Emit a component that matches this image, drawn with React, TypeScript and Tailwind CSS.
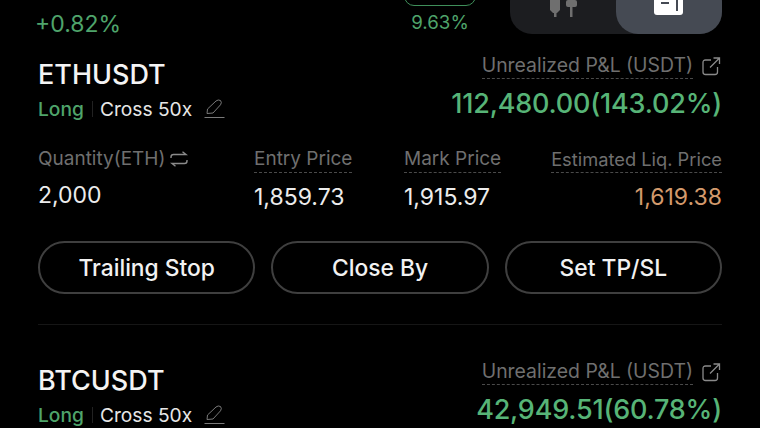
const font = { fontFamily: 'Inter, "Liberation Sans", sans-serif' }

function EditIcon() {
  return (
    <svg width="21" height="20" viewBox="0 0 21 20" fill="none" stroke="#7a7a7a" strokeWidth="1" className="ml-[12px]">
      <path d="M3 14.5 L3.5 10 L12 2 Q14.2 0.2 16.5 1.5 Q18.2 3.5 16.5 5.8 L9 14 Z" />
      <path d="M0.5 18.5 H20.5" />
    </svg>
  )
}

function LinkIcon() {
  return (
    <svg width="19" height="19" viewBox="0 0 19 19" fill="none" stroke="#8a8a8a" strokeWidth="1.3" className="mr-[1px]">
      <path d="M9 3 H3.5 Q1 3 1 5.5 V15 Q1 17.5 3.5 17.5 H13 Q15.5 17.5 15.5 15 V10" />
      <path d="M8 10.5 L17.5 1 M11.5 1 H17.5 V7" />
    </svg>
  )
}

function SwapIcon() {
  return (
    <svg width="18" height="16" viewBox="0 0 18 16" fill="none" stroke="#8a8a8a" strokeWidth="1.4" className="ml-[5px]">
      <path d="M1 7 V6 Q1 3.5 3.5 3.5 H16 L12.5 0.8" />
      <path d="M17 9 V10 Q17 12.5 14.5 12.5 H2 L5.5 15.2" />
    </svg>
  )
}

function Dotted({ children }: { children: React.ReactNode }) {
  return <span className="border-b border-dashed border-[#4a4a4a] pb-[1px] text-[19px] leading-[24px] text-[#6f6f6f]">{children}</span>
}

interface PositionProps {
  symbol: string
  pnl: string
}

function PositionHead({ symbol, pnl }: PositionProps) {
  return (
    <div className="flex justify-between">
      <div className="mt-[8px] flex flex-col">
        <span className="text-[27px] leading-[32px] font-medium text-[#f4f4f4]">{symbol}</span>
        <div className="mt-[6px] flex items-center text-[19.2px] leading-[24px]">
          <span className="font-medium text-[#4fa46b]">Long</span>
          <span className="mr-[7px] ml-[8px] h-[16px] w-px bg-[#222]" />
          <span className="text-[#e6e6e6]">Cross 50x</span>
          <EditIcon />
        </div>
      </div>
      <div className="mt-[2px] flex flex-col items-end">
        <div className="flex items-center gap-[9px]">
          <span className="border-b border-dashed border-[#4a4a4a] pb-[1px] text-[19.4px] leading-[24px] text-[#6f6f6f]">Unrealized P&amp;L (USDT)</span>
          <LinkIcon />
        </div>
        <span className="mt-[8px] text-[27px] leading-[34px] font-medium tracking-[-0.2px] text-[#57b477]">{pnl}</span>
      </div>
    </div>
  )
}

function Stat({ label, value }: { label: React.ReactNode; value: string }) {
  return (
    <div className="flex flex-col items-start">
      {label}
      <span className="mt-[10px] text-[23px] leading-[28px] text-[#ececec]">{value}</span>
    </div>
  )
}

function PillButton({ label }: { label: string }) {
  return (
    <button type="button" className="h-[53px] flex-1 rounded-full border-2 border-[#3f3f3f] pt-[2px] text-[22.8px] font-medium text-[#f2f2f2]">
      {label}
    </button>
  )
}

export default function App() {
  return (
    <div style={font} className="h-[428px] w-[760px] overflow-hidden bg-black">
      <div className="flex h-[49px] items-start justify-between pr-[38px] pl-[35px]">
        <span className="mt-[10px] text-[23px] leading-[28px] text-[#4fa46b]">+0.82%</span>
        <div className="ml-auto flex flex-col items-center">
          <div className="mt-[-20px] h-[26px] w-[72px] rounded-[10px] border border-[#3f8f5a]" />
          <span className="mt-[6px] text-[18.7px] leading-[22px] text-[#4fa46b]">9.63%</span>
        </div>
        <div className="mt-[-20px] ml-[34px] flex h-[54px] w-[212px] rounded-[22px] bg-[#1c1d20]">
          <div className="flex w-[106px] items-start justify-center">
            <svg width="30" height="18" viewBox="0 0 30 18" fill="#6f6f6f" className="mt-[20px]">
              <path d="M2 0 H12 V10 L9 13 H5 L2 10 Z" />
              <rect x="6" y="12" width="2.5" height="5" />
              <rect x="18" y="0" width="11" height="7" rx="2" />
              <rect x="22" y="6" width="2.5" height="11" />
            </svg>
          </div>
          <div className="flex w-[106px] items-start justify-center rounded-[22px] bg-[#454a53]">
            <svg width="30" height="36" viewBox="0 0 30 36" className="mt-0">
              <rect x="0" y="4" width="29" height="31" rx="3" fill="#fff" />
              <rect x="7" y="22" width="8" height="2" fill="#454a53" />
              <rect x="22" y="14" width="2" height="17" fill="#454a53" />
            </svg>
          </div>
        </div>
      </div>

      <div className="px-[38px]">
        <div className="pt-[2px]">
          <PositionHead symbol="ETHUSDT" pnl="112,480.00(143.02%)" />
        </div>

        <div className="mt-[26px] flex">
          <div className="w-[216px]">
            <Stat
              label={
                <span className="flex items-center text-[19px] leading-[24px] text-[#6f6f6f]">
                  Quantity(ETH)
                  <SwapIcon />
                </span>
              }
              value="2,000"
            />
          </div>
          <div className="w-[150px]">
            <Stat label={<Dotted>Entry Price</Dotted>} value="1,859.73" />
          </div>
          <div className="flex-1">
            <Stat label={<Dotted>Mark Price</Dotted>} value="1,915.97" />
          </div>
          <div className="flex flex-col items-end">
            <span className="border-b border-dashed border-[#4a4a4a] pb-[1px] text-[18.3px] leading-[24px] text-[#6f6f6f]">Estimated Liq. Price</span>
            <span className="mt-[10px] text-[23px] leading-[28px] text-[#d39a6c]">1,619.38</span>
          </div>
        </div>

        <div className="mt-[30px] flex gap-[16px]">
          <PillButton label="Trailing Stop" />
          <PillButton label="Close By" />
          <PillButton label="Set TP/SL" />
        </div>

        <div className="mt-[30px] h-px bg-[#161616]" />

        <div className="pt-[32px]">
          <PositionHead symbol="BTCUSDT" pnl="42,949.51(60.78%)" />
        </div>
      </div>
    </div>
  )
}
